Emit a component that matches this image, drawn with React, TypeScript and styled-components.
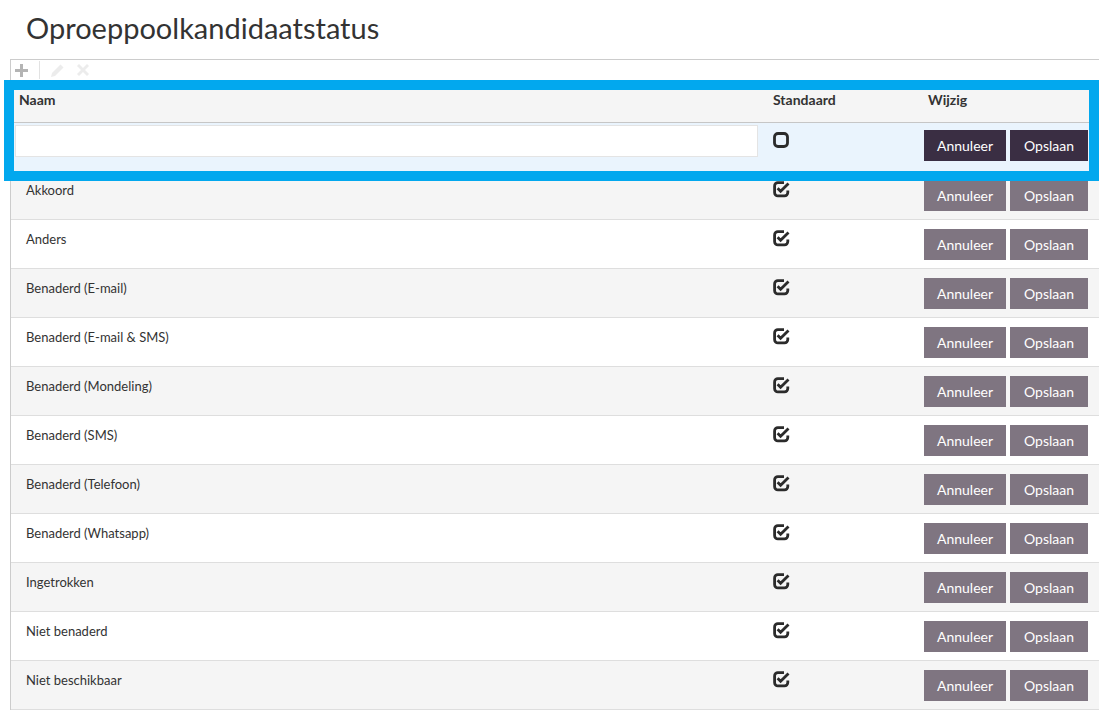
import styled, { createGlobalStyle } from 'styled-components';

const GlobalStyle = createGlobalStyle`
  html, body {
    margin: 0;
    padding: 0;
    background: #ffffff;
    font-family: Lato, "Open Sans", sans-serif;
    color: #333333;
  }
  * { box-sizing: border-box; }
`;

const Page = styled.div`
  width: 1099px;
  height: 713px;
  overflow: hidden;
`;

const Title = styled.h1`
  margin: 0;
  padding: 10px 0 0 26px;
  height: 59px;
  font-size: 29px;
  font-weight: 400;
  line-height: 36px;
  color: #333;
`;

const Panel = styled.div`
  margin-left: 10px;
  border-top: 1px solid #cccccc;
  border-left: 1px solid #cccccc;
`;

const Toolbar = styled.div`
  height: 20px;
  display: flex;
  align-items: center;
  padding-left: 3px;
`;

const ToolIcon = styled.span<{ $faint?: boolean }>`
  width: 15px;
  height: 15px;
  display: flex;
  align-items: center;
  justify-content: center;
  margin-right: 10px;
  color: ${({ $faint }) => ($faint ? '#ececec' : '#b4b4b4')};
`;

const ToolSep = styled.span`
  width: 1px;
  height: 18px;
  background: #e2e2e2;
  margin-right: 10px;
`;

const Highlight = styled.div`
  position: relative;
`;

const Frame = styled.div`
  position: absolute;
  left: -7px;
  right: 0;
  top: 0;
  bottom: -10px;
  border: 10px solid #02a8ee;
  pointer-events: none;
`;

const Row = styled.div<{ $bg: string; $height: number; $border?: string }>`
  display: grid;
  grid-template-columns: 756px 155px 1fr;
  height: ${({ $height }) => $height}px;
  background: ${({ $bg }) => $bg};
  border-bottom: 1px solid ${({ $border }) => $border || '#dedede'};
`;

const HeadCell = styled.div<{ $pad: number }>`
  padding: 10px 0 0 ${({ $pad }) => $pad}px;
  font-size: 14px;
  font-weight: 700;
  line-height: 20px;
  color: #333;
`;

const Cell = styled.div<{ $pad?: number; $top?: number }>`
  padding-left: ${({ $pad }) => $pad ?? 0}px;
  padding-top: ${({ $top }) => $top ?? 0}px;
  font-size: 13px;
  line-height: 20px;
  color: #333;
`;

const ButtonCell = styled.div<{ $top: number }>`
  display: flex;
  gap: 4px;
  padding: ${({ $top }) => $top}px 0 0 2px;
`;

const Input = styled.input`
  display: block;
  margin: 2px 0 0 4px;
  width: 743px;
  height: 32px;
  border: 1px solid #e4e4e4;
  background: #ffffff;
  outline: none;
`;

const Button = styled.button<{ $active?: boolean; $w: number }>`
  width: ${({ $w }) => $w}px;
  height: 31px;
  border: none;
  padding: 0;
  font-family: Lato, "Open Sans", sans-serif;
  font-size: 14px;
  color: #ffffff;
  background: ${({ $active }) => ($active ? '#3a2e43' : '#7f7581')};
  cursor: pointer;
`;

const Plus = () => (
  <svg width="13" height="13" viewBox="0 0 13 13">
    <path d="M5 0h3v5h5v3H8v5H5V8H0V5h5z" fill="currentColor" />
  </svg>
);

const Pencil = () => (
  <svg width="15" height="15" viewBox="0 0 15 15">
    <path d="M10.5 1.5l3 3L5 13l-4 1 1-4z" fill="currentColor" />
  </svg>
);

const Cross = () => (
  <svg width="12" height="12" viewBox="0 0 12 12">
    <path d="M2 0l4 4 4-4 2 2-4 4 4 4-2 2-4-4-4 4-2-2 4-4-4-4z" fill="currentColor" />
  </svg>
);

const SquareIcon = () => (
  <svg width="17" height="17" viewBox="0 0 17 17">
    <rect x="1.5" y="1.5" width="13" height="13" rx="3.5" fill="none" stroke="#2b2b2b" strokeWidth="2.8" />
  </svg>
);

const CheckIcon = () => (
  <svg width="18" height="17" viewBox="0 0 18 17">
    <path
      d="M11 1.6H5A3.3 3.3 0 0 0 1.6 5v6.5A3.3 3.3 0 0 0 5 14.9h6.5a3.3 3.3 0 0 0 3.3-3.3V9.5"
      fill="none"
      stroke="#2b2b2b"
      strokeWidth="2.8"
    />
    <path d="M4.6 7.2l3 3L15.5 2.4" fill="none" stroke="#2b2b2b" strokeWidth="2.8" />
  </svg>
);

const ROWS = [
  'Akkoord',
  'Anders',
  'Benaderd (E-mail)',
  'Benaderd (E-mail & SMS)',
  'Benaderd (Mondeling)',
  'Benaderd (SMS)',
  'Benaderd (Telefoon)',
  'Benaderd (Whatsapp)',
  'Ingetrokken',
  'Niet benaderd',
  'Niet beschikbaar',
];

export default function App() {
  return (
    <Page>
      <GlobalStyle />
      <Title>Oproeppoolkandidaatstatus</Title>
      <Panel>
        <Toolbar>
          <ToolIcon>
            <Plus />
          </ToolIcon>
          <ToolSep />
          <ToolIcon $faint>
            <Pencil />
          </ToolIcon>
          <ToolIcon $faint>
            <Cross />
          </ToolIcon>
        </Toolbar>
        <Highlight>
          <Row $bg="#f5f5f5" $height={43} $border="#c6c6c6">
            <HeadCell $pad={8}>Naam</HeadCell>
            <HeadCell $pad={6}>Standaard</HeadCell>
            <HeadCell $pad={6}>Wijzig</HeadCell>
          </Row>
          <Row $bg="#eaf4fd" $height={48} $border="#eaf4fd">
            <Cell>
              <Input />
            </Cell>
            <Cell $pad={6} $top={9}>
              <SquareIcon />
            </Cell>
            <ButtonCell $top={7}>
              <Button $active $w={82}>Annuleer</Button>
              <Button $active $w={78}>Opslaan</Button>
            </ButtonCell>
          </Row>
          <Frame />
        </Highlight>
        {ROWS.map((name, i) => (
          <Row key={name} $bg={i % 2 === 0 ? '#f5f5f5' : '#ffffff'} $height={49}>
            <Cell $pad={15} $top={9}>
              {name}
            </Cell>
            <Cell $pad={6} $top={10}>
              <CheckIcon />
            </Cell>
            <ButtonCell $top={9}>
              <Button $w={82}>Annuleer</Button>
              <Button $w={78}>Opslaan</Button>
            </ButtonCell>
          </Row>
        ))}
      </Panel>
    </Page>
  );
}
